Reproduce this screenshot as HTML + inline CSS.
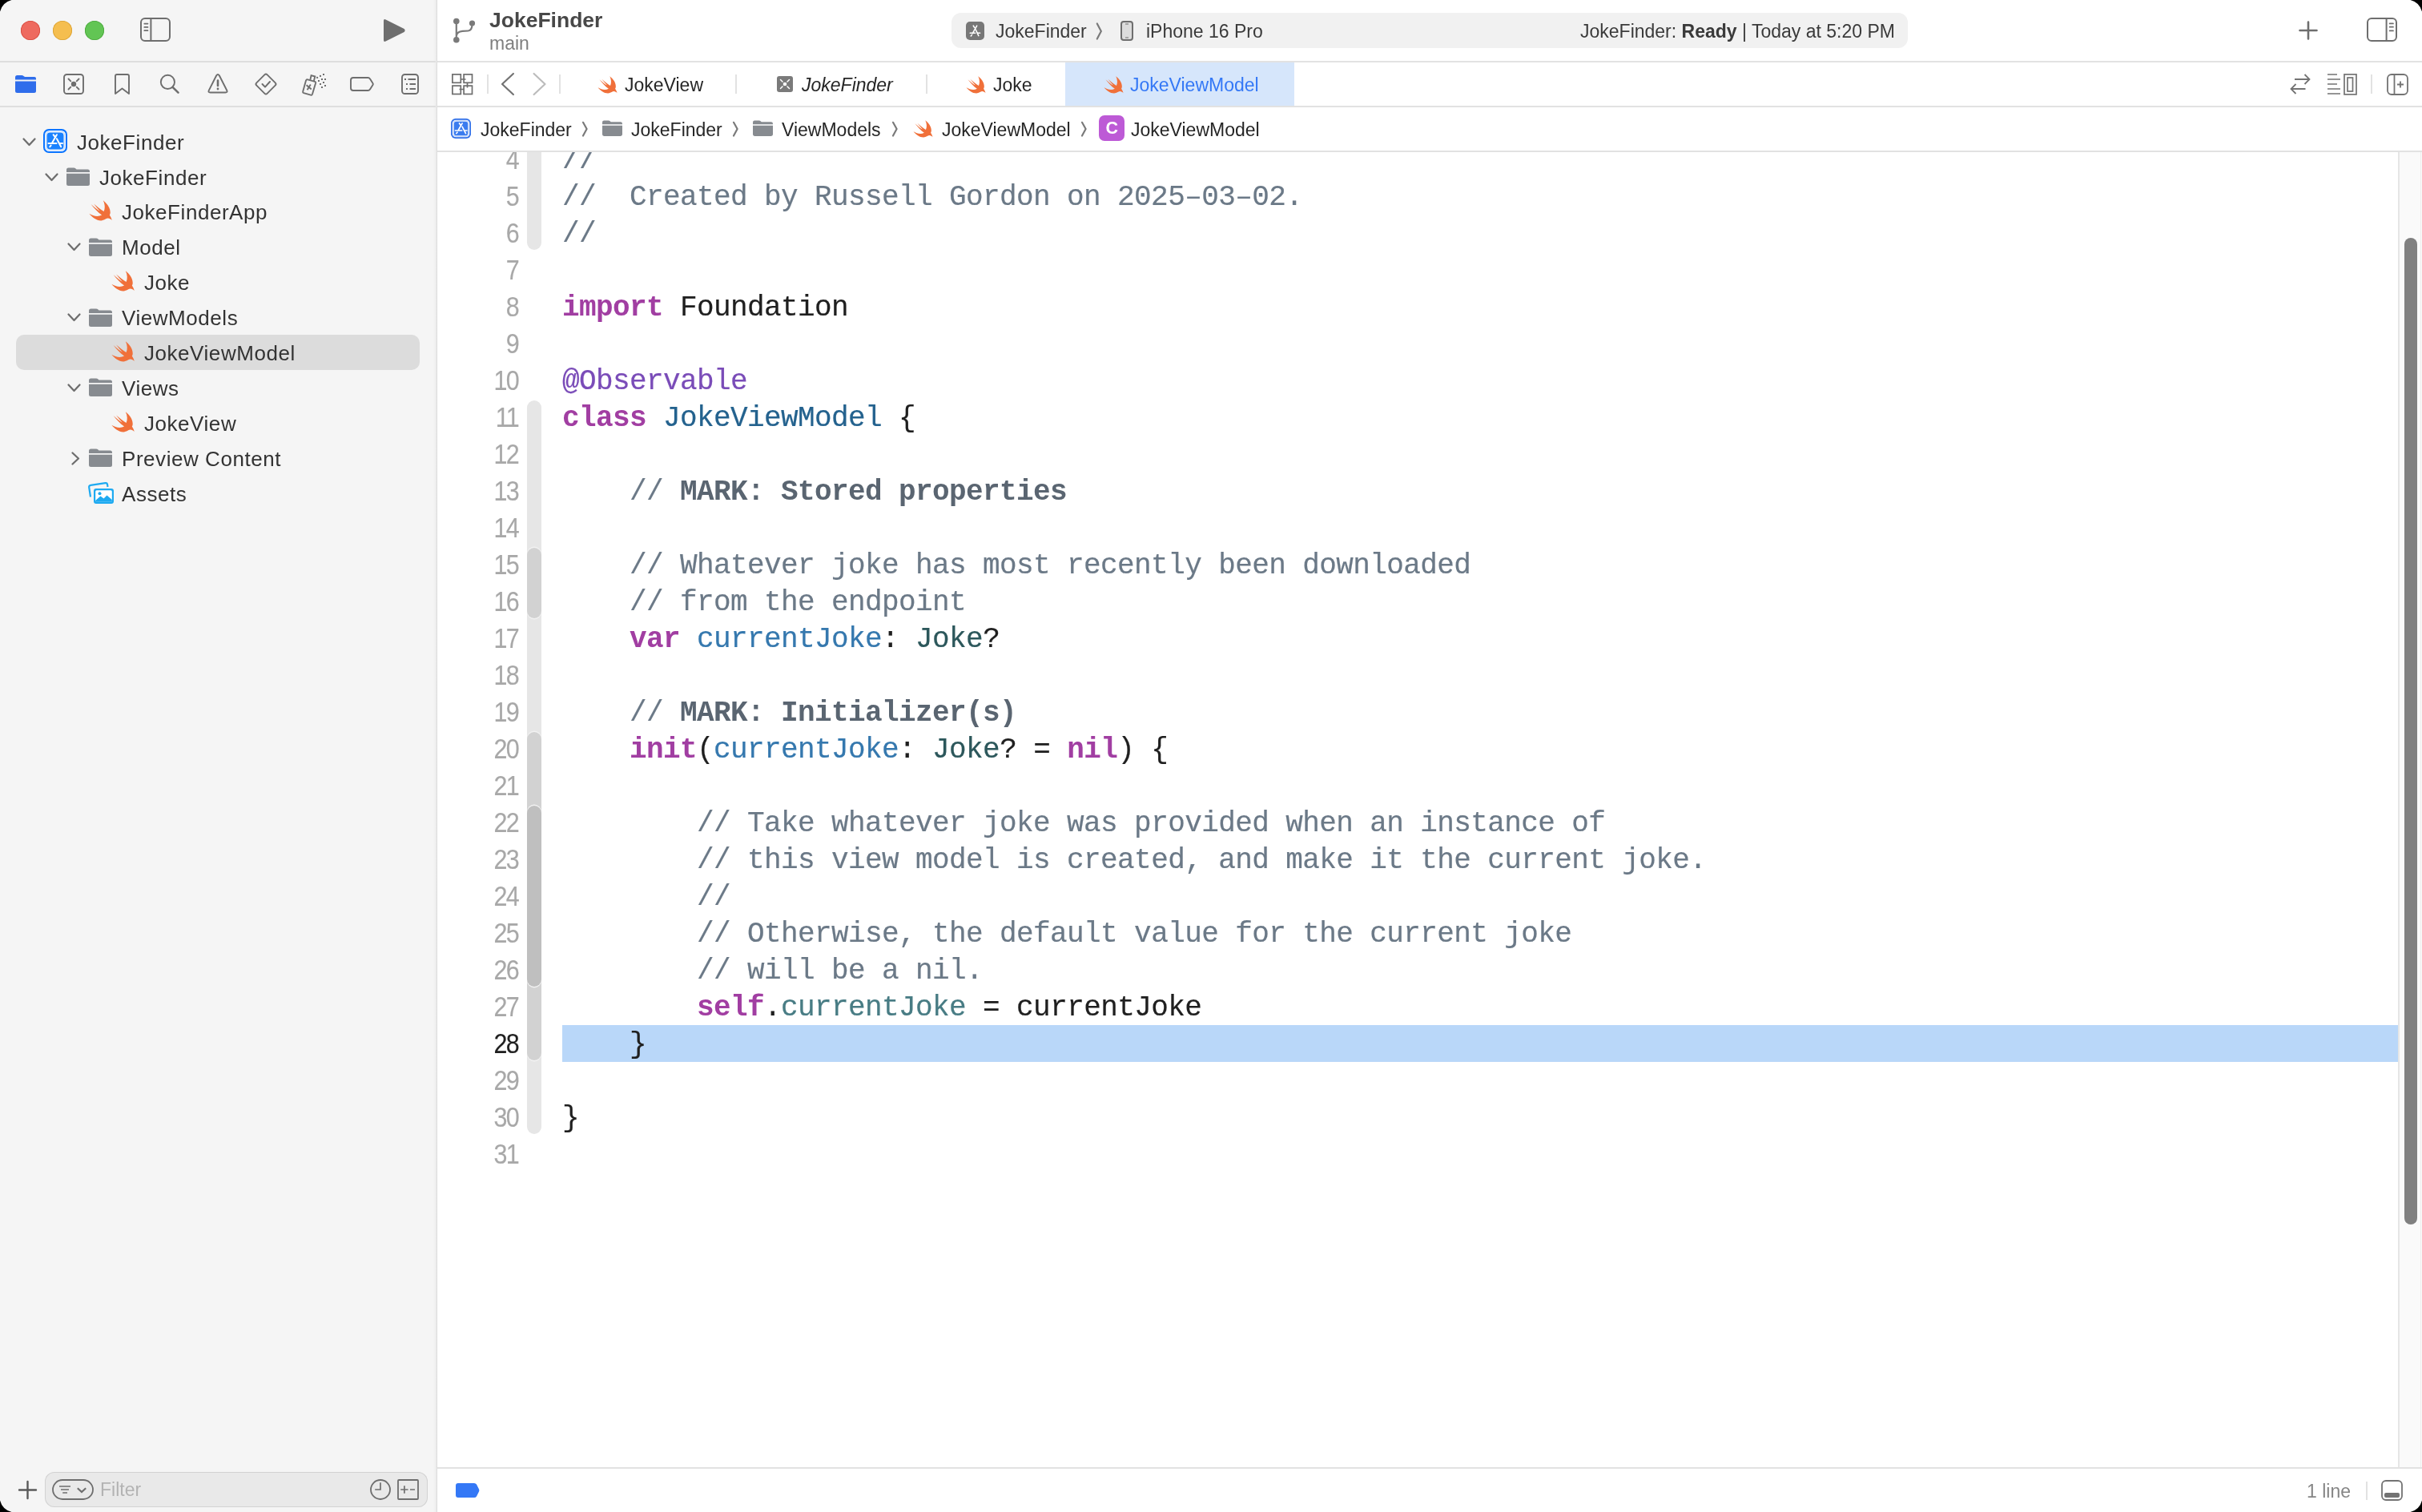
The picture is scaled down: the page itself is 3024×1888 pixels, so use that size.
<!DOCTYPE html>
<html><head><meta charset="utf-8">
<style>
html,body{margin:0;padding:0;}
body{width:3024px;height:1888px;position:relative;overflow:hidden;background:#fff;font-family:"Liberation Sans",sans-serif;}
.a{position:absolute;}
.t{position:absolute;white-space:pre;line-height:1;font-family:"Liberation Sans",sans-serif;}
svg{position:absolute;overflow:visible;}
#side{left:0;top:0;width:545px;height:1888px;background:#f5f5f5;}
#sideborder{left:541px;top:0;width:5px;height:1888px;background:linear-gradient(to right,#f5f5f5 0px,#f1f1f1 2px,#ebebeb 3.6px,#dcdcdc 4.2px,#dedede 5px);}
.hl{height:2px;background:#e2e2e2;}
.sl{height:2px;background:#dedede;}
.row{font-size:26px;letter-spacing:0.55px;color:#333333;}
.ui{font-size:23px;color:#262626;}
#code{left:0;top:0;}
.ln{position:absolute;left:560px;width:87px;text-align:right;font-family:"Liberation Sans",sans-serif;font-size:35px;letter-spacing:-1.9px;color:#a8a8a8;-webkit-text-stroke:0.15px currentColor;transform:scaleX(0.87);transform-origin:100% 50%;line-height:46px;height:46px;}
.cl{position:absolute;left:702px;font-family:"Liberation Mono",monospace;font-size:36px;letter-spacing:-0.6px;-webkit-text-stroke:0.2px currentColor;line-height:46px;height:46px;white-space:pre;color:#1f1f1f;}
.cm{color:#6b7987;}
.mk{color:#5a6571;font-weight:bold;-webkit-text-stroke:0;}
.kw{color:#a13ea2;font-weight:bold;-webkit-text-stroke:0;}
.at{color:#7a4cb8;}
.td{color:#24628e;}
.od{color:#3578ae;}
.pt{color:#2c575b;}
.pp{color:#487c84;}
</style></head><body><div style="position:absolute;left:0;top:0;width:3024px;height:1888px;will-change:opacity;opacity:0.999;">
<!-- sidebar -->
<div id="side" class="a"></div>
<div id="sideborder" class="a"></div>
<div class="a sl" style="left:0;top:76px;width:544px;"></div>
<div class="a sl" style="left:0;top:132px;width:544px;"></div>
<!-- editor header lines -->
<div class="a hl" style="left:546px;top:76px;width:2478px;"></div>
<div class="a hl" style="left:546px;top:132px;width:2478px;"></div>
<div class="a hl" style="left:546px;top:188px;width:2478px;"></div>
<div class="a hl" style="left:546px;top:1832px;width:2478px;"></div>


<!-- ===== title bar ===== -->
<div class="a" style="left:26px;top:26px;width:24px;height:24px;border-radius:50%;background:#ee6a5f;box-shadow:inset 0 0 0 0.8px #d5493d;"></div>
<div class="a" style="left:66px;top:26px;width:24px;height:24px;border-radius:50%;background:#f5be4f;box-shadow:inset 0 0 0 0.8px #d9a032;"></div>
<div class="a" style="left:106px;top:26px;width:24px;height:24px;border-radius:50%;background:#62c554;box-shadow:inset 0 0 0 0.8px #4aa63c;"></div>
<!-- sidebar toggle -->
<svg style="left:175px;top:22px" width="38" height="30" viewBox="0 0 38 30"><rect x="1" y="1" width="36" height="28" rx="5" fill="none" stroke="#6e6e6e" stroke-width="2"/><line x1="13.4" y1="1" x2="13.4" y2="29" stroke="#6e6e6e" stroke-width="2"/><path d="M5.3 7.6H9.5M5.3 11.9H9.5M5.3 16.2H9.5" stroke="#6e6e6e" stroke-width="1.7" stroke-linecap="round"/></svg>
<!-- play -->
<svg style="left:478px;top:23px" width="29" height="30" viewBox="0 0 29 30"><path d="M1 3Q1 0.2 3.6 1.5L26.6 13Q28.6 15 26.6 17L3.6 28.5Q1 29.8 1 27Z" fill="#6e6e6e"/></svg>
<!-- branch -->
<svg style="left:565px;top:22px" width="32" height="34" viewBox="0 0 32 34"><circle cx="4.8" cy="4.5" r="3.8" fill="#7a7a7a"/><circle cx="4.8" cy="27.8" r="3.8" fill="#7a7a7a"/><circle cx="24.5" cy="7" r="3.6" fill="#7a7a7a"/><path d="M4.8 4.5V27.8M4.8 23Q5.5 17.3 12.5 16.8L19.5 16.5Q24.5 16.2 24.5 8" fill="none" stroke="#7a7a7a" stroke-width="2.2"/></svg>
<div class="t" style="left:611px;top:11.5px;font-size:26.5px;font-weight:bold;color:#484848;">JokeFinder</div>
<div class="t" style="left:611px;top:42.5px;font-size:23px;color:#7f7f7f;">main</div>
<!-- scheme pill -->
<div class="a" style="left:1188px;top:16px;width:1194px;height:44px;border-radius:12px;background:#f1f1f1;"></div>
<svg style="left:1206px;top:27px" width="24" height="24" viewBox="0 0 24 24"><rect x="0" y="0" width="23" height="23" rx="5" fill="#777"/><g stroke="#fff" stroke-width="1.6" stroke-linecap="round" fill="none"><path d="M9.3 5.2L10.7 7.4M13.7 5.2L8.2 14.8M12.2 10L15.8 17.6M5.2 14.3H11.7M14.8 14.3H17.6M7.3 16.6L6.3 18"/></g></svg>
<div class="t ui" style="left:1243px;top:27.7px;color:#3a3a3a;">JokeFinder</div>
<svg style="left:1368px;top:28px" width="9" height="22" viewBox="0 0 9 22"><path d="M1.8 1.5L6.8 11L1.8 20.5" fill="none" stroke="#7a7a7a" stroke-width="2.2" stroke-linecap="round"/></svg>
<svg style="left:1399px;top:26px" width="16" height="25" viewBox="0 0 16 25"><rect x="1" y="1" width="14" height="23" rx="3" fill="#dcdcdc" stroke="#6e6e6e" stroke-width="2"/><path d="M6 4H10M6 21H10" stroke="#6e6e6e" stroke-width="1.2"/></svg>
<div class="t ui" style="left:1431px;top:27.7px;color:#3a3a3a;">iPhone 16 Pro</div>
<div class="t ui" style="left:1973px;top:27.7px;color:#3a3a3a;">JokeFinder: <b>Ready</b> | Today at 5:20 PM</div>
<!-- plus -->
<svg style="left:2870px;top:26px" width="24" height="24" viewBox="0 0 24 24"><path d="M12 1.5V22.5M1.5 12H22.5" stroke="#6e6e6e" stroke-width="2.6" stroke-linecap="round"/></svg>
<!-- right sidebar toggle -->
<svg style="left:2955px;top:22px" width="38" height="30" viewBox="0 0 38 30"><rect x="1" y="1" width="36" height="28" rx="5" fill="none" stroke="#6e6e6e" stroke-width="2"/><line x1="24.6" y1="1" x2="24.6" y2="29" stroke="#6e6e6e" stroke-width="2"/><path d="M28.6 7.4H33M28.6 11.7H33M28.6 16.4H33" stroke="#6e6e6e" stroke-width="1.7" stroke-linecap="round"/></svg>

<!-- ===== navigator selector bar ===== -->
<svg style="left:19px;top:93px" width="27" height="24" viewBox="0 0 27 24"><path d="M0 3.5Q0 1 2.5 1H8Q9.5 1 10.5 2L12 3H24Q26 3 26 5V6.5H0Z" fill="#2f6deb"/><path d="M0 8.5H26V20.5Q26 23 23.5 23H2.5Q0 23 0 20.5Z" fill="#2f6deb"/></svg>
<svg style="left:79px;top:92px" width="26" height="26" viewBox="0 0 26 26"><rect x="1" y="1" width="24" height="24" rx="3.5" fill="none" stroke="#6e6e6e" stroke-width="1.9"/><circle cx="13" cy="13" r="3.2" fill="#6e6e6e"/><path d="M6.5 6.5L9.3 9.3M19.5 6.5L16.7 9.3M6.5 19.5L9.3 16.7M19.5 19.5L16.7 16.7" stroke="#6e6e6e" stroke-width="1.9" stroke-linecap="round"/></svg>
<svg style="left:143px;top:92px" width="19" height="26" viewBox="0 0 19 26"><path d="M1 3Q1 1 3 1H16Q18 1 18 3V25L9.5 18.5L1 25Z" fill="none" stroke="#6e6e6e" stroke-width="1.9" stroke-linejoin="round"/></svg>
<svg style="left:199px;top:92px" width="26" height="26" viewBox="0 0 26 26"><circle cx="10.4" cy="10.4" r="8.6" fill="none" stroke="#6e6e6e" stroke-width="1.9"/><path d="M16.6 16.8L23.5 23.7" stroke="#6e6e6e" stroke-width="2.6" stroke-linecap="round"/></svg>
<svg style="left:259px;top:92px" width="26" height="25" viewBox="0 0 26 25"><path d="M11.2 2.2Q13 -0.3 14.8 2.2L24.2 20.8Q25.5 23.5 22.5 23.5H3.5Q0.5 23.5 1.8 20.8Z" fill="none" stroke="#6e6e6e" stroke-width="1.9" stroke-linejoin="round"/><path d="M13 8.5V15" stroke="#6e6e6e" stroke-width="2.6" stroke-linecap="round"/><circle cx="13" cy="19" r="1.4" fill="#6e6e6e"/></svg>
<svg style="left:318px;top:91px" width="28" height="28" viewBox="0 0 28 28"><path d="M12.3 2.3Q14 0.6 15.7 2.3L25.7 12.3Q27.4 14 25.7 15.7L15.7 25.7Q14 27.4 12.3 25.7L2.3 15.7Q0.6 14 2.3 12.3Z" fill="none" stroke="#6e6e6e" stroke-width="1.9"/><path d="M9.5 14L13 17.6L19 11" fill="none" stroke="#6e6e6e" stroke-width="2" stroke-linecap="round" stroke-linejoin="round"/></svg>
<svg style="left:377px;top:92px" width="32" height="28" viewBox="0 0 32 28"><path d="M5 8.5Q5.6 7 7.2 7.4L16 9.8Q17.5 10.3 17.1 11.8L13 25.5Q12.5 27 11 26.6L2.2 24.2Q0.8 23.7 1.2 22.3Z" fill="none" stroke="#6e6e6e" stroke-width="1.9"/><path d="M10.3 7.8L11.6 2.2L16.3 3.5L14.9 9.1" fill="none" stroke="#6e6e6e" stroke-width="1.9"/><path d="M5.6 14.2L11.8 19.4M10.8 13.4L6.6 20.2" stroke="#6e6e6e" stroke-width="1.9"/><g fill="#6e6e6e"><rect x="18.1" y="3.9" width="2" height="2"/><rect x="22" y="1.9" width="2" height="2"/><rect x="26" y="0" width="2" height="2"/><rect x="24" y="6" width="2" height="2"/><rect x="28" y="6" width="2" height="2"/><rect x="20" y="8" width="2" height="2"/><rect x="26" y="10" width="2" height="2"/><rect x="22" y="12" width="2" height="2"/><rect x="28" y="14" width="2" height="2"/><rect x="24" y="16" width="2" height="2"/></g></svg>
<svg style="left:437px;top:96px" width="30" height="18" viewBox="0 0 30 18"><path d="M4 1H22.5Q24 1 25 2.5L28.5 8Q29.2 9 28.5 10L25 15.5Q24 17 22.5 17H4Q1 17 1 14V4Q1 1 4 1Z" fill="none" stroke="#6e6e6e" stroke-width="1.9"/></svg>
<svg style="left:501px;top:92px" width="22" height="26" viewBox="0 0 22 26"><rect x="1" y="1" width="20" height="24" rx="3.5" fill="none" stroke="#6e6e6e" stroke-width="1.9"/><g fill="#6e6e6e"><rect x="4" y="6" width="2" height="2"/><rect x="6" y="12" width="2" height="2"/><rect x="6" y="18" width="2" height="2"/></g><path d="M8.5 7H18M10.5 13H18M10.5 19H18" stroke="#6e6e6e" stroke-width="1.9"/></svg>

<!-- ===== navigator tree ===== -->
<div class="a" style="left:20px;top:418px;width:504px;height:44px;border-radius:10px;background:#dcdcdc;"></div>
<svg style="left:28px;top:172.0px" width="17" height="11" viewBox="0 0 17 11"><path d="M1.5 1.5L8.5 9L15.5 1.5" fill="none" stroke="#6e6e6e" stroke-width="2.3" stroke-linecap="round" stroke-linejoin="round"/></svg>
<svg style="left:54px;top:161px" width="30" height="30" viewBox="0 0 30 30"><rect x="0" y="0" width="30" height="30" rx="7" fill="#0a74ff"/><rect x="2" y="2" width="26" height="26" rx="5.5" fill="#ffffff"/><rect x="2.8" y="2.8" width="24.4" height="24.4" rx="5" fill="#c4dcfb"/><rect x="3.8" y="3.8" width="22.4" height="22.4" rx="4.5" fill="#ffffff"/><rect x="4.5" y="4.5" width="21" height="21" rx="4" fill="#1a82ff"/><g stroke="#fff" stroke-width="2" stroke-linecap="round" fill="none"><path d="M12.6 7.2L14.8 10.2M16.9 7.2L11 17.5M16.9 12.2L22.2 22.3M6.5 18H16.5M20.5 18H24M9.6 20.6L8.2 22.3"/></g></svg>
<div class="t row" style="left:96px;top:165.1px;">JokeFinder</div>
<svg style="left:56px;top:215.5px" width="17" height="11" viewBox="0 0 17 11"><path d="M1.5 1.5L8.5 9L15.5 1.5" fill="none" stroke="#6e6e6e" stroke-width="2.3" stroke-linecap="round" stroke-linejoin="round"/></svg>
<svg style="left:83px;top:209.0px" width="29" height="23" viewBox="0 0 29 23"><path d="M0 3Q0 0.5 2.5 0.5H9Q10.5 0.5 11.5 1.5L12.5 2.5H26.5Q29 2.5 29 5V6H0Z" fill="#878b90"/><path d="M0 7.8H29V20.5Q29 23 26.5 23H2.5Q0 23 0 20.5Z" fill="#878b90"/></svg>
<div class="t row" style="left:124px;top:208.6px;">JokeFinder</div>
<svg style="left:111px;top:250.2px" width="29" height="26" viewBox="0 0 29 26"><path d="M17.8 0.3C22.5 4 26.6 9.2 26.7 14.9C26.8 16.6 26.2 18 25.8 18.6C27.3 20.7 28.3 23.3 28.7 25.1C27.3 23.7 25.6 22.5 23.5 22.6C21 22.8 19.2 25.3 15.2 25.4C9.3 25.5 4.2 21.4 0.4 16.8C5.2 19.8 11.3 21.2 16.1 18.6C11.3 15.2 6.3 9.6 2.6 4.9C6.8 8.6 11.2 12.1 13.8 13.7C10.9 10.6 8.3 7.3 6.1 4.4C10.5 8.3 15.3 12 18.6 14.1C20.4 10.3 20.1 5 17.8 0.3Z" fill="#f0703a"/></svg>
<div class="t row" style="left:152px;top:252.3px;">JokeFinderApp</div>
<svg style="left:84px;top:303.1px" width="17" height="11" viewBox="0 0 17 11"><path d="M1.5 1.5L8.5 9L15.5 1.5" fill="none" stroke="#6e6e6e" stroke-width="2.3" stroke-linecap="round" stroke-linejoin="round"/></svg>
<svg style="left:111px;top:296.6px" width="29" height="23" viewBox="0 0 29 23"><path d="M0 3Q0 0.5 2.5 0.5H9Q10.5 0.5 11.5 1.5L12.5 2.5H26.5Q29 2.5 29 5V6H0Z" fill="#878b90"/><path d="M0 7.8H29V20.5Q29 23 26.5 23H2.5Q0 23 0 20.5Z" fill="#878b90"/></svg>
<div class="t row" style="left:152px;top:296.2px;">Model</div>
<svg style="left:139px;top:338.0px" width="29" height="26" viewBox="0 0 29 26"><path d="M17.8 0.3C22.5 4 26.6 9.2 26.7 14.9C26.8 16.6 26.2 18 25.8 18.6C27.3 20.7 28.3 23.3 28.7 25.1C27.3 23.7 25.6 22.5 23.5 22.6C21 22.8 19.2 25.3 15.2 25.4C9.3 25.5 4.2 21.4 0.4 16.8C5.2 19.8 11.3 21.2 16.1 18.6C11.3 15.2 6.3 9.6 2.6 4.9C6.8 8.6 11.2 12.1 13.8 13.7C10.9 10.6 8.3 7.3 6.1 4.4C10.5 8.3 15.3 12 18.6 14.1C20.4 10.3 20.1 5 17.8 0.3Z" fill="#f0703a"/></svg>
<div class="t row" style="left:180px;top:340.1px;">Joke</div>
<svg style="left:84px;top:391.1px" width="17" height="11" viewBox="0 0 17 11"><path d="M1.5 1.5L8.5 9L15.5 1.5" fill="none" stroke="#6e6e6e" stroke-width="2.3" stroke-linecap="round" stroke-linejoin="round"/></svg>
<svg style="left:111px;top:384.6px" width="29" height="23" viewBox="0 0 29 23"><path d="M0 3Q0 0.5 2.5 0.5H9Q10.5 0.5 11.5 1.5L12.5 2.5H26.5Q29 2.5 29 5V6H0Z" fill="#878b90"/><path d="M0 7.8H29V20.5Q29 23 26.5 23H2.5Q0 23 0 20.5Z" fill="#878b90"/></svg>
<div class="t row" style="left:152px;top:384.2px;">ViewModels</div>
<svg style="left:139px;top:425.9px" width="29" height="26" viewBox="0 0 29 26"><path d="M17.8 0.3C22.5 4 26.6 9.2 26.7 14.9C26.8 16.6 26.2 18 25.8 18.6C27.3 20.7 28.3 23.3 28.7 25.1C27.3 23.7 25.6 22.5 23.5 22.6C21 22.8 19.2 25.3 15.2 25.4C9.3 25.5 4.2 21.4 0.4 16.8C5.2 19.8 11.3 21.2 16.1 18.6C11.3 15.2 6.3 9.6 2.6 4.9C6.8 8.6 11.2 12.1 13.8 13.7C10.9 10.6 8.3 7.3 6.1 4.4C10.5 8.3 15.3 12 18.6 14.1C20.4 10.3 20.1 5 17.8 0.3Z" fill="#f0703a"/></svg>
<div class="t row" style="left:180px;top:428.0px;">JokeViewModel</div>
<svg style="left:84px;top:478.9px" width="17" height="11" viewBox="0 0 17 11"><path d="M1.5 1.5L8.5 9L15.5 1.5" fill="none" stroke="#6e6e6e" stroke-width="2.3" stroke-linecap="round" stroke-linejoin="round"/></svg>
<svg style="left:111px;top:472.4px" width="29" height="23" viewBox="0 0 29 23"><path d="M0 3Q0 0.5 2.5 0.5H9Q10.5 0.5 11.5 1.5L12.5 2.5H26.5Q29 2.5 29 5V6H0Z" fill="#878b90"/><path d="M0 7.8H29V20.5Q29 23 26.5 23H2.5Q0 23 0 20.5Z" fill="#878b90"/></svg>
<div class="t row" style="left:152px;top:472.0px;">Views</div>
<svg style="left:139px;top:513.8px" width="29" height="26" viewBox="0 0 29 26"><path d="M17.8 0.3C22.5 4 26.6 9.2 26.7 14.9C26.8 16.6 26.2 18 25.8 18.6C27.3 20.7 28.3 23.3 28.7 25.1C27.3 23.7 25.6 22.5 23.5 22.6C21 22.8 19.2 25.3 15.2 25.4C9.3 25.5 4.2 21.4 0.4 16.8C5.2 19.8 11.3 21.2 16.1 18.6C11.3 15.2 6.3 9.6 2.6 4.9C6.8 8.6 11.2 12.1 13.8 13.7C10.9 10.6 8.3 7.3 6.1 4.4C10.5 8.3 15.3 12 18.6 14.1C20.4 10.3 20.1 5 17.8 0.3Z" fill="#f0703a"/></svg>
<div class="t row" style="left:180px;top:515.9px;">JokeView</div>
<svg style="left:89px;top:563.5px" width="11" height="17" viewBox="0 0 11 17"><path d="M1.5 1.5L9 8.5L1.5 15.5" fill="none" stroke="#6e6e6e" stroke-width="2.3" stroke-linecap="round" stroke-linejoin="round"/></svg>
<svg style="left:111px;top:560.0px" width="29" height="23" viewBox="0 0 29 23"><path d="M0 3Q0 0.5 2.5 0.5H9Q10.5 0.5 11.5 1.5L12.5 2.5H26.5Q29 2.5 29 5V6H0Z" fill="#878b90"/><path d="M0 7.8H29V20.5Q29 23 26.5 23H2.5Q0 23 0 20.5Z" fill="#878b90"/></svg>
<div class="t row" style="left:152px;top:559.6px;">Preview Content</div>
<svg style="left:110px;top:601.5px" width="33" height="28" viewBox="0 0 33 28"><path d="M3 18.5L1.2 6.5Q0.9 4.2 3.2 3.9L21.5 1.2Q23.8 0.9 24.1 3.2L24.5 6" fill="none" stroke="#1eaaf1" stroke-width="2.2"/><rect x="7" y="8" width="25" height="19" rx="3" fill="#1eaaf1"/><rect x="9.2" y="10.2" width="20.6" height="14.6" rx="1.5" fill="#fff"/><path d="M9.2 23L15.5 17.5L19.5 20.5L23.5 16.5L29.8 22V24.8H9.2Z" fill="#1eaaf1"/><circle cx="14.5" cy="14.3" r="2" fill="#1eaaf1"/></svg>
<div class="t row" style="left:152px;top:603.6px;">Assets</div>

<!-- ===== filter bar ===== -->
<svg style="left:23px;top:1849px" width="23" height="23" viewBox="0 0 23 23"><path d="M11.5 1V22M1 11.5H22" stroke="#5a5a5a" stroke-width="2.4" stroke-linecap="round"/></svg>
<div class="a" style="left:56px;top:1838px;width:478px;height:44px;border-radius:12px;background:#e9e9e9;box-shadow:inset 0 0 0 1px #d2d2d2;"></div>
<svg style="left:65px;top:1847px" width="52" height="26" viewBox="0 0 52 26"><rect x="1" y="1" width="50" height="24" rx="12" fill="none" stroke="#6e6e6e" stroke-width="1.8"/><path d="M9 9H23M11 13H21M13.2 17H19" stroke="#6e6e6e" stroke-width="1.6"/><path d="M31.8 11.2L37 16L42.2 11.2" fill="none" stroke="#6e6e6e" stroke-width="2.2"/></svg>
<div class="t ui" style="left:125px;top:1848.7px;color:#b3b3b3;">Filter</div>
<svg style="left:462px;top:1847px" width="26" height="26" viewBox="0 0 26 26"><circle cx="13" cy="13" r="12" fill="none" stroke="#6e6e6e" stroke-width="1.8"/><path d="M13 4.2V13H6.2" fill="none" stroke="#6e6e6e" stroke-width="1.7"/></svg>
<svg style="left:496px;top:1847px" width="27" height="26" viewBox="0 0 27 26"><rect x="1" y="1" width="25" height="24" rx="1" fill="none" stroke="#6e6e6e" stroke-width="1.8"/><path d="M4.2 13H13.5M8.9 8.2V17.7M16 13H22" stroke="#6e6e6e" stroke-width="1.7"/></svg>

<!-- ===== editor tab bar ===== -->
<svg style="left:564px;top:92px" width="27" height="27" viewBox="0 0 27 27"><g fill="none" stroke="#6e6e6e" stroke-width="1.7"><rect x="0.9" y="0.9" width="10.4" height="10.4"/><rect x="15.1" y="0.9" width="10.4" height="10.4"/><rect x="0.9" y="15.1" width="10.4" height="10.4"/><rect x="15.1" y="15.1" width="10.4" height="10.4"/><path d="M11.3 7H17.5M19.5 11.3V17.5M9.5 19.5H15.1"/></g></svg>
<div class="a" style="left:608px;top:93px;width:2px;height:24px;background:#e2e2e2;"></div>
<svg style="left:625px;top:91px" width="18" height="28" viewBox="0 0 18 28"><path d="M15.9 1L2 14L15.9 27" fill="none" stroke="#737373" stroke-width="2.2" stroke-linecap="round" stroke-linejoin="round"/></svg>
<svg style="left:665px;top:91px" width="18" height="28" viewBox="0 0 18 28"><path d="M1.6 1L15.5 14L1.6 27" fill="none" stroke="#bcbcbc" stroke-width="2.2" stroke-linecap="round" stroke-linejoin="round"/></svg>
<div class="a" style="left:698px;top:93px;width:2px;height:24px;background:#e2e2e2;"></div>
<svg style="left:746px;top:94.5px" width="25" height="22" viewBox="0 0 29 26"><path d="M17.8 0.3C22.5 4 26.6 9.2 26.7 14.9C26.8 16.6 26.2 18 25.8 18.6C27.3 20.7 28.3 23.3 28.7 25.1C27.3 23.7 25.6 22.5 23.5 22.6C21 22.8 19.2 25.3 15.2 25.4C9.3 25.5 4.2 21.4 0.4 16.8C5.2 19.8 11.3 21.2 16.1 18.6C11.3 15.2 6.3 9.6 2.6 4.9C6.8 8.6 11.2 12.1 13.8 13.7C10.9 10.6 8.3 7.3 6.1 4.4C10.5 8.3 15.3 12 18.6 14.1C20.4 10.3 20.1 5 17.8 0.3Z" fill="#f0703a"/></svg>
<div class="t ui" style="left:780px;top:94.7px;">JokeView</div>
<div class="a" style="left:918px;top:93px;width:2px;height:24px;background:#e2e2e2;"></div>
<svg style="left:970px;top:95px" width="20" height="20" viewBox="0 0 20 20"><rect x="0" y="0" width="20" height="20" rx="3" fill="#7a7a7a"/><circle cx="10" cy="10" r="2.3" fill="#fff"/><path d="M4.5 4.5L7 7M15.5 4.5L13 7M4.5 15.5L7 13M15.5 15.5L13 13" stroke="#fff" stroke-width="1.5" stroke-linecap="round"/></svg>
<div class="t ui" style="left:1001px;top:94.7px;font-style:italic;">JokeFinder</div>
<div class="a" style="left:1156px;top:93px;width:2px;height:24px;background:#e2e2e2;"></div>
<svg style="left:1206px;top:94.5px" width="25" height="22" viewBox="0 0 29 26"><path d="M17.8 0.3C22.5 4 26.6 9.2 26.7 14.9C26.8 16.6 26.2 18 25.8 18.6C27.3 20.7 28.3 23.3 28.7 25.1C27.3 23.7 25.6 22.5 23.5 22.6C21 22.8 19.2 25.3 15.2 25.4C9.3 25.5 4.2 21.4 0.4 16.8C5.2 19.8 11.3 21.2 16.1 18.6C11.3 15.2 6.3 9.6 2.6 4.9C6.8 8.6 11.2 12.1 13.8 13.7C10.9 10.6 8.3 7.3 6.1 4.4C10.5 8.3 15.3 12 18.6 14.1C20.4 10.3 20.1 5 17.8 0.3Z" fill="#f0703a"/></svg>
<div class="t ui" style="left:1240px;top:94.7px;">Joke</div>
<div class="a" style="left:1330px;top:78px;width:286px;height:54px;background:#d6e6fb;"></div>
<svg style="left:1378px;top:94.5px" width="25" height="22" viewBox="0 0 29 26"><path d="M17.8 0.3C22.5 4 26.6 9.2 26.7 14.9C26.8 16.6 26.2 18 25.8 18.6C27.3 20.7 28.3 23.3 28.7 25.1C27.3 23.7 25.6 22.5 23.5 22.6C21 22.8 19.2 25.3 15.2 25.4C9.3 25.5 4.2 21.4 0.4 16.8C5.2 19.8 11.3 21.2 16.1 18.6C11.3 15.2 6.3 9.6 2.6 4.9C6.8 8.6 11.2 12.1 13.8 13.7C10.9 10.6 8.3 7.3 6.1 4.4C10.5 8.3 15.3 12 18.6 14.1C20.4 10.3 20.1 5 17.8 0.3Z" fill="#f0703a"/></svg>
<div class="t ui" style="left:1411px;top:94.7px;color:#3478f6;">JokeViewModel</div>
<!-- right icons of tab bar -->
<svg style="left:2859px;top:92px" width="26" height="27" viewBox="0 0 26 27"><path d="M6 7H24.5M18.5 1L24.5 7L18.5 13M19.5 19H1.5M7.5 13L1.5 19L7.5 25" fill="none" stroke="#737373" stroke-width="1.8"/></svg>
<svg style="left:2906px;top:92px" width="37" height="27" viewBox="0 0 37 27"><path d="M0 1H12M0 7H16M0 13H12M0 19H16M0 25H16" stroke="#737373" stroke-width="1.7"/><rect x="21" y="0.9" width="15" height="25" fill="none" stroke="#737373" stroke-width="1.7"/><rect x="25" y="5" width="6.5" height="17" fill="none" stroke="#737373" stroke-width="1.7"/></svg>
<div class="a" style="left:2960px;top:93px;width:2px;height:24px;background:#e2e2e2;"></div>
<svg style="left:2980px;top:92px" width="27" height="27" viewBox="0 0 27 27"><rect x="1" y="1" width="25" height="25" rx="5" fill="none" stroke="#737373" stroke-width="1.8"/><path d="M9.5 1V26M13 13.5H21M17 9.5V17.5" stroke="#737373" stroke-width="1.8"/></svg>

<!-- ===== breadcrumb ===== -->
<svg style="left:563px;top:147.5px" width="25" height="25" viewBox="0 0 30 30"><rect x="0" y="0" width="30" height="30" rx="7" fill="#2e6fe9"/><rect x="2" y="2" width="26" height="26" rx="5.5" fill="#ffffff"/><rect x="2.8" y="2.8" width="24.4" height="24.4" rx="5" fill="#b9d0f7"/><rect x="3.8" y="3.8" width="22.4" height="22.4" rx="4.5" fill="#ffffff"/><rect x="4.5" y="4.5" width="21" height="21" rx="4" fill="#3a7cef"/><g stroke="#fff" stroke-width="2" stroke-linecap="round" fill="none"><path d="M12.6 7.2L14.8 10.2M16.9 7.2L11 17.5M16.9 12.2L22.2 22.3M6.5 18H16.5M20.5 18H24M9.6 20.6L8.2 22.3"/></g></svg>
<div class="t ui" style="left:600px;top:150.7px;">JokeFinder</div>
<svg style="left:726px;top:151px" width="9" height="20" viewBox="0 0 9 20"><path d="M2 1.8L6.6 10L2 18.6" fill="none" stroke="#7a7a7a" stroke-width="2.2" stroke-linecap="round" stroke-linejoin="round"/></svg>
<svg style="left:752px;top:150px" width="25" height="20" viewBox="0 0 29 23"><path d="M0 3Q0 0.5 2.5 0.5H9Q10.5 0.5 11.5 1.5L12.5 2.5H26.5Q29 2.5 29 5V6H0Z" fill="#878b90"/><path d="M0 7.8H29V20.5Q29 23 26.5 23H2.5Q0 23 0 20.5Z" fill="#878b90"/></svg>
<div class="t ui" style="left:788px;top:150.7px;">JokeFinder</div>
<svg style="left:914px;top:151px" width="9" height="20" viewBox="0 0 9 20"><path d="M2 1.8L6.6 10L2 18.6" fill="none" stroke="#7a7a7a" stroke-width="2.2" stroke-linecap="round" stroke-linejoin="round"/></svg>
<svg style="left:940px;top:150px" width="25" height="20" viewBox="0 0 29 23"><path d="M0 3Q0 0.5 2.5 0.5H9Q10.5 0.5 11.5 1.5L12.5 2.5H26.5Q29 2.5 29 5V6H0Z" fill="#878b90"/><path d="M0 7.8H29V20.5Q29 23 26.5 23H2.5Q0 23 0 20.5Z" fill="#878b90"/></svg>
<div class="t ui" style="left:976px;top:150.7px;">ViewModels</div>
<svg style="left:1113px;top:151px" width="9" height="20" viewBox="0 0 9 20"><path d="M2 1.8L6.6 10L2 18.6" fill="none" stroke="#7a7a7a" stroke-width="2.2" stroke-linecap="round" stroke-linejoin="round"/></svg>
<svg style="left:1140px;top:149.5px" width="25" height="22" viewBox="0 0 29 26"><path d="M17.8 0.3C22.5 4 26.6 9.2 26.7 14.9C26.8 16.6 26.2 18 25.8 18.6C27.3 20.7 28.3 23.3 28.7 25.1C27.3 23.7 25.6 22.5 23.5 22.6C21 22.8 19.2 25.3 15.2 25.4C9.3 25.5 4.2 21.4 0.4 16.8C5.2 19.8 11.3 21.2 16.1 18.6C11.3 15.2 6.3 9.6 2.6 4.9C6.8 8.6 11.2 12.1 13.8 13.7C10.9 10.6 8.3 7.3 6.1 4.4C10.5 8.3 15.3 12 18.6 14.1C20.4 10.3 20.1 5 17.8 0.3Z" fill="#f0703a"/></svg>
<div class="t ui" style="left:1176px;top:150.7px;">JokeViewModel</div>
<svg style="left:1349px;top:151px" width="9" height="20" viewBox="0 0 9 20"><path d="M2 1.8L6.6 10L2 18.6" fill="none" stroke="#7a7a7a" stroke-width="2.2" stroke-linecap="round" stroke-linejoin="round"/></svg>
<div class="a" style="left:1372px;top:144px;width:32px;height:32px;border-radius:7px;background:#bd5ad6;"></div>
<div class="t" style="left:1380.5px;top:150px;font-size:21.5px;font-weight:bold;color:#fff;">C</div>
<div class="t ui" style="left:1412px;top:150.7px;">JokeViewModel</div>

<!-- ===== bottom status bar ===== -->
<svg style="left:568px;top:1851px" width="31" height="20" viewBox="0 0 31 20"><path d="M4 1H24Q26 1 27 2.5L30 8.5Q30.8 10 30 11.5L27 17.5Q26 19 24 19H4Q1 19 1 16V4Q1 1 4 1Z" fill="#3478f6"/></svg>
<div class="t ui" style="left:2880px;top:1850.7px;color:#858585;">1 line</div>
<div class="a" style="left:2954px;top:1850px;width:2px;height:23px;background:#e2e2e2;"></div>
<svg style="left:2973px;top:1848px" width="27" height="26" viewBox="0 0 27 26"><rect x="1" y="1" width="25" height="24" rx="5" fill="none" stroke="#737373" stroke-width="1.8"/><rect x="4" y="16" width="19" height="6" rx="2" fill="#737373"/></svg>

<!-- scrollbar -->
<div class="a" style="left:2994px;top:190px;width:2px;height:1642px;background:#e6e6e6;"></div>
<div class="a" style="left:2996px;top:190px;width:28px;height:1642px;background:#fafafa;"></div>
<div class="a" style="left:3002px;top:297px;width:16px;height:1232px;border-radius:8px;background:#808080;"></div>
<div class="a" style="left:3022px;top:190px;width:1px;height:1642px;background:#ededed;"></div>

<!-- code -->
<div class="a" id="ed" style="left:546px;top:190px;width:2448px;height:1642px;overflow:hidden;">
<div class="a" style="left:156px;top:1090px;width:2292px;height:46px;background:#b9d7f9;"></div>
<div class="a" style="left:112px;top:-12.5px;width:18px;height:134.5px;border-radius:9px;background:#e6e6e6;"></div>
<div class="a" style="left:112px;top:309.5px;width:18px;height:916.5px;border-radius:9px;background:#e6e6e6;"></div>
<div class="a" style="left:112px;top:493.5px;width:18px;height:88.5px;border-radius:9px;background:#d2d2d2;box-shadow:0 -1.5px 0 0 #f2f2f2,0 1.5px 0 0 #f2f2f2;"></div>
<div class="a" style="left:112px;top:723.5px;width:18px;height:410.5px;border-radius:9px;background:#d2d2d2;box-shadow:0 -1.5px 0 0 #f2f2f2,0 1.5px 0 0 #f2f2f2;"></div>
<div class="a" style="left:112px;top:815.5px;width:18px;height:226.5px;border-radius:9px;background:#bfbfbf;box-shadow:0 -1.5px 0 0 #f2f2f2,0 1.5px 0 0 #f2f2f2;"></div>
<div class="ln" style="top:-14.2px;left:14px;">4</div>
<div class="cl" style="top:-12.0px;left:156px;"><span class="cm">//</span></div>
<div class="ln" style="top:31.8px;left:14px;">5</div>
<div class="cl" style="top:34.0px;left:156px;"><span class="cm">//  Created by Russell Gordon on 2025–03–02.</span></div>
<div class="ln" style="top:77.8px;left:14px;">6</div>
<div class="cl" style="top:80.0px;left:156px;"><span class="cm">//</span></div>
<div class="ln" style="top:123.8px;left:14px;">7</div>
<div class="ln" style="top:169.8px;left:14px;">8</div>
<div class="cl" style="top:172.0px;left:156px;"><span class="kw">import</span> Foundation</div>
<div class="ln" style="top:215.8px;left:14px;">9</div>
<div class="ln" style="top:261.8px;left:14px;">10</div>
<div class="cl" style="top:264.0px;left:156px;"><span class="at">@Observable</span></div>
<div class="ln" style="top:307.8px;left:14px;">11</div>
<div class="cl" style="top:310.0px;left:156px;"><span class="kw">class</span> <span class="td">JokeViewModel</span> {</div>
<div class="ln" style="top:353.8px;left:14px;">12</div>
<div class="ln" style="top:399.8px;left:14px;">13</div>
<div class="cl" style="top:402.0px;left:156px;">    <span class="cm">// </span><span class="mk">MARK: Stored properties</span></div>
<div class="ln" style="top:445.8px;left:14px;">14</div>
<div class="ln" style="top:491.8px;left:14px;">15</div>
<div class="cl" style="top:494.0px;left:156px;">    <span class="cm">// Whatever joke has most recently been downloaded</span></div>
<div class="ln" style="top:537.8px;left:14px;">16</div>
<div class="cl" style="top:540.0px;left:156px;">    <span class="cm">// from the endpoint</span></div>
<div class="ln" style="top:583.8px;left:14px;">17</div>
<div class="cl" style="top:586.0px;left:156px;">    <span class="kw">var</span> <span class="od">currentJoke</span>: <span class="pt">Joke</span>?</div>
<div class="ln" style="top:629.8px;left:14px;">18</div>
<div class="ln" style="top:675.8px;left:14px;">19</div>
<div class="cl" style="top:678.0px;left:156px;">    <span class="cm">// </span><span class="mk">MARK: Initializer(s)</span></div>
<div class="ln" style="top:721.8px;left:14px;">20</div>
<div class="cl" style="top:724.0px;left:156px;">    <span class="kw">init</span>(<span class="od">currentJoke</span>: <span class="pt">Joke</span>? = <span class="kw">nil</span>) {</div>
<div class="ln" style="top:767.8px;left:14px;">21</div>
<div class="ln" style="top:813.8px;left:14px;">22</div>
<div class="cl" style="top:816.0px;left:156px;">        <span class="cm">// Take whatever joke was provided when an instance of</span></div>
<div class="ln" style="top:859.8px;left:14px;">23</div>
<div class="cl" style="top:862.0px;left:156px;">        <span class="cm">// this view model is created, and make it the current joke.</span></div>
<div class="ln" style="top:905.8px;left:14px;">24</div>
<div class="cl" style="top:908.0px;left:156px;">        <span class="cm">//</span></div>
<div class="ln" style="top:951.8px;left:14px;">25</div>
<div class="cl" style="top:954.0px;left:156px;">        <span class="cm">// Otherwise, the default value for the current joke</span></div>
<div class="ln" style="top:997.8px;left:14px;">26</div>
<div class="cl" style="top:1000.0px;left:156px;">        <span class="cm">// will be a nil.</span></div>
<div class="ln" style="top:1043.8px;left:14px;">27</div>
<div class="cl" style="top:1046.0px;left:156px;">        <span class="kw">self</span>.<span class="pp">currentJoke</span> = currentJoke</div>
<div class="ln" style="top:1089.8px;left:14px;color:#1f1f1f;">28</div>
<div class="cl" style="top:1092.0px;left:156px;">    }</div>
<div class="ln" style="top:1135.8px;left:14px;">29</div>
<div class="ln" style="top:1181.8px;left:14px;">30</div>
<div class="cl" style="top:1184.0px;left:156px;">}</div>
<div class="ln" style="top:1227.8px;left:14px;">31</div>
</div>
<!-- window corners -->
<svg style="left:0;top:0" width="20" height="20"><path d="M0 0H14.5Q3 3 0 14.5Z" fill="#000"/></svg>
<svg style="left:3004px;top:0" width="20" height="20"><path d="M20 0H5.5Q17 3 20 14.5Z" fill="#000"/></svg>
<svg style="left:0;top:1868px" width="20" height="20"><path d="M0 20H14.5Q3 17 0 5.5Z" fill="#000"/></svg>
<svg style="left:3004px;top:1868px" width="20" height="20"><path d="M20 20H5.5Q17 17 20 5.5Z" fill="#000"/></svg>
</div></body></html>
